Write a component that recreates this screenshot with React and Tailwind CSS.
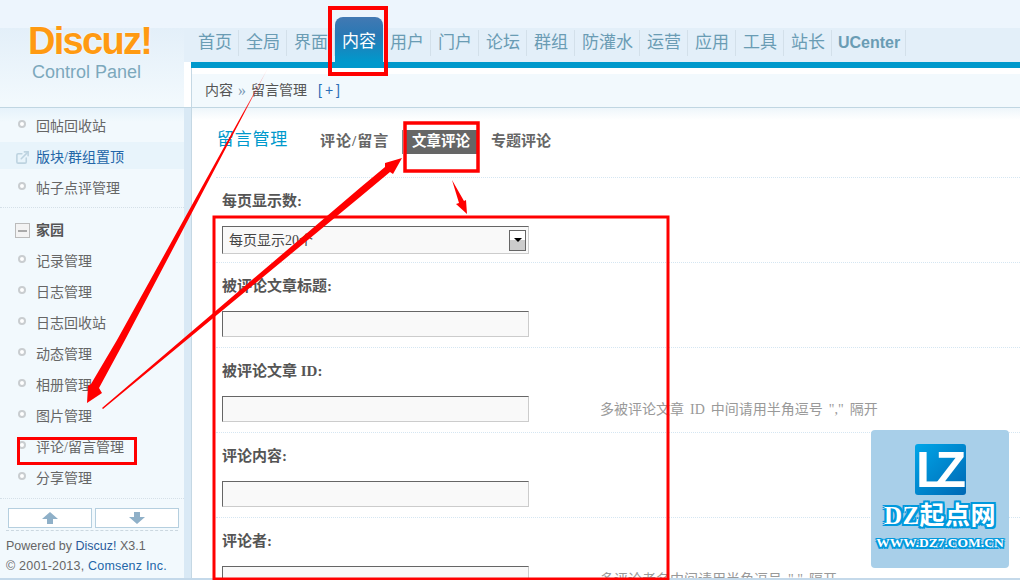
import React from 'react';
import { ExternalLink } from 'lucide-react';

const navItems = ['首页', '全局', '界面', '内容', '用户', '门户', '论坛', '群组', '防灌水', '运营', '应用', '工具', '站长'];

const formRows = [
    { label: '被评论文章标题:' },
    { label: '被评论文章 ID:', hint: '多被评论文章 ID 中间请用半角逗号 "," 隔开' },
    { label: '评论内容:' },
    { label: '评论者:', hint: '多评论者名中间请用半角逗号 "," 隔开' },
];

function SideItem({ text }) {
    return (
        <div className="flex h-[31px] items-center pl-[18px] text-[14px] text-[#666]">
            <span className="mr-[10px] mb-[6px] h-[8px] w-[8px] rounded-full border-2 border-[#c9cdd0] bg-white" />
            {text}
        </div>
    );
}

function Sidebar() {
    return (
        <div className="flex w-[192px] shrink-0 border-r border-[#c5d8e4] bg-[#d9e9f5]">
            <div className="flex w-[184px] flex-col bg-[#f2f9fd] bg-[linear-gradient(#e6f2fb,#f2f9fd_14px)] pt-[3px]">
                <SideItem text="回帖回收站" />
                <div className="flex h-[31px] items-center bg-[linear-gradient(#e8f4fb_27px,transparent_27px)] pl-[15px] text-[14px] text-[#2366a8]">
                    <ExternalLink size={15} strokeWidth={2.5} className="mr-[6px] text-[#bdd3e0]" />
                    版块/群组置顶
                </div>
                <SideItem text="帖子点评管理" />
                <div className="mt-[3px] border-b border-dotted border-[#d5e0e8]" />
                <div className="mt-[7px] flex h-[31px] items-center pl-[15px] text-[14px] font-bold text-[#555]">
                    <span className="mr-[6px] flex h-[15px] w-[15px] items-center justify-center border border-[#bbb] bg-[#f3f3f3]">
                        <span className="h-[2px] w-[9px] bg-[#aaa]" />
                    </span>
                    家园
                </div>
                <SideItem text="记录管理" />
                <SideItem text="日志管理" />
                <SideItem text="日志回收站" />
                <SideItem text="动态管理" />
                <SideItem text="相册管理" />
                <SideItem text="图片管理" />
                <SideItem text="评论/留言管理" />
                <SideItem text="分享管理" />
                <div className="mt-[4px] border-b border-dotted border-[#d5e0e8]" />
                <div className="mt-[9px] flex gap-[3px] pl-[8px]">
                    <div className="flex h-[20px] w-[84px] items-center justify-center border border-[#b5cfdf] bg-white">
                        <svg width="16" height="12" viewBox="0 0 16 12"><polygon points="8,0 16,7 11,7 11,12 5,12 5,7 0,7" fill="#8fb0c8" /></svg>
                    </div>
                    <div className="flex h-[20px] w-[84px] items-center justify-center border border-[#b5cfdf] bg-white">
                        <svg width="16" height="12" viewBox="0 0 16 12"><polygon points="8,12 16,5 11,5 11,0 5,0 5,5 0,5" fill="#8fb0c8" /></svg>
                    </div>
                </div>
                <div className="mx-[6px] mt-[2px] border-b border-dashed border-[#ccd8e0]" />
                <div className="mt-[5px] pl-[6px] font-['Liberation_Sans',sans-serif] text-[12.5px] leading-[20px] whitespace-nowrap text-[#666]">
                    <div>Powered by <span className="text-[#2a5a9a]">Discuz!</span> X3.1</div>
                    <div className="tracking-[0.2px]">© 2001-2013, <span className="text-[#2366a8]">Comsenz Inc.</span></div>
                </div>
            </div>
        </div>
    );
}

function Field({ label, hint }) {
    return (
        <div className="h-[85px] border-b border-dotted border-[#d5e6f2] pt-[15px]">
            <div className="pl-[6px] text-[15px] leading-[16px] font-bold text-[#555]">{label}</div>
            <div className="mt-[17px] flex items-center pl-[6px]">
                <input
                    readOnly
                    className="h-[26px] w-[307px] border border-[#666] border-r-[#ccc] border-b-[#ccc] bg-[#f9f9f9]"
                />
                {hint && <span className="ml-[71px] text-[14px] whitespace-nowrap text-[#999] [word-spacing:2.5px]">{hint}</span>}
            </div>
        </div>
    );
}

function Main() {
    return (
        <div className="min-w-0 flex-1 bg-white bg-[linear-gradient(#eef6fb,#ffffff_12px)] pl-[24px]">
            <div className="flex h-[70px] items-center border-b border-dotted border-[#d5e6f2] pb-[2px]">
                <div className="mb-[4px] ml-[1px] w-[103px] text-[17px] tracking-[0.75px] whitespace-nowrap text-[#0099cc]">留言管理</div>
                <div className="w-[69px] text-[15px] font-bold tracking-[1px] whitespace-nowrap text-[#666]">评论/留言</div>
                <div className="ml-[13px] h-[24px] border-l border-[#888]" />
                <div className="ml-[2px] flex h-[24px] w-[72px] items-center justify-center bg-[#666] text-[14.5px] font-bold text-white">文章评论</div>
                <div className="ml-[14px] text-[15px] font-bold text-[#666]">专题评论</div>
            </div>
            <div className="h-[85px] border-b border-dotted border-[#d5e6f2] pt-[15px]">
                <div className="pl-[6px] text-[15px] leading-[16px] font-bold text-[#555]">每页显示数:</div>
                <div className="mt-[17px] pl-[6px]">
                    <div className="flex h-[28px] w-[307px] items-center justify-between border border-[#666] border-r-[#ccc] border-b-[#ccc] bg-[#f9f9f9] pr-[2px] pl-[6px] text-[14px] text-[#444]">
                        每页显示20个
                        <span className="flex h-[21px] w-[17px] justify-center border border-[#666] bg-[linear-gradient(#fff_45%,#ccc_45%)] pt-[7px]">
                            <span className="h-0 w-0 border-x-[4px] border-t-[4px] border-x-transparent border-t-black" />
                        </span>
                    </div>
                </div>
            </div>
            {formRows.map((row) => (
                <Field key={row.label} label={row.label} hint={row.hint} />
            ))}
        </div>
    );
}

function Annotations() {
    return (
        <svg className="pointer-events-none absolute inset-0" width="1020" height="580" viewBox="0 0 1020 580">
            <defs>
                <linearGradient id="fade" gradientUnits="userSpaceOnUse" x1="0" y1="68" x2="0" y2="115">
                    <stop offset="0" stopColor="#ff0000" stopOpacity="0.15" />
                    <stop offset="1" stopColor="#ff0000" />
                </linearGradient>
            </defs>
            <g fill="none" stroke="#ff0000">
                <rect x="330" y="8" width="56" height="66" strokeWidth="4" />
                <rect x="405" y="123" width="73" height="48" strokeWidth="3.5" />
                <rect x="214" y="217" width="454" height="362" strokeWidth="3" />
                <rect x="18.5" y="438.5" width="117" height="25" strokeWidth="3" />
            </g>
            <polygon fill="url(#fade)" points="268,68 125,340 99,388 102,393 87,403 88,386 91,384 117,340" />
            <g fill="#ff0000">
                <polygon points="102,408 361,187 385,167 385,163 402,158 393,174 390,172 360,197 103,409" />
                <polygon points="452,180 464,201 466,200 467,214 456,204 459,203" />
            </g>
        </svg>
    );
}

function Watermark() {
    return (
        <div className="absolute top-[430px] left-[871px] flex h-[138px] w-[138px] flex-col items-center rounded-[4px] bg-[#a8cfe9] pt-[14px]">
            <div className="flex h-[51px] w-[51px] items-center justify-center rounded-[3px] bg-[linear-gradient(135deg,#00a6e8,#0068b4)] pr-[9px] font-['Liberation_Sans',sans-serif] text-[50px] leading-none font-bold tracking-[-11px] text-white">
                LZ
            </div>
            <div className="mt-[8px] text-[25px] leading-[26px] font-bold tracking-[0.5px] whitespace-nowrap text-white [text-shadow:2px_0_#0099dd,-2px_0_#0099dd,0_2px_#0099dd,0_-2px_#0099dd,2px_2px_#0099dd,-2px_-2px_#0099dd,2px_-2px_#0099dd,-2px_2px_#0099dd]">
                DZ起点网
            </div>
            <div className="mt-[7px] font-['Liberation_Serif',serif] text-[13.5px] leading-[14px] font-bold whitespace-nowrap text-white [text-shadow:1.5px_0_#0099dd,-1.5px_0_#0099dd,0_1.5px_#0099dd,0_-1.5px_#0099dd,1.5px_1.5px_#0099dd,-1.5px_-1.5px_#0099dd,1.5px_-1.5px_#0099dd,-1.5px_1.5px_#0099dd]">
                WWW.DZ7.COM.CN
            </div>
        </div>
    );
}

export default function App() {
    return (
        <div className="relative flex h-[580px] w-[1020px] flex-col overflow-hidden bg-white font-['Liberation_Serif','Noto_Sans_CJK_SC',serif]">
            {/* cabecera */}
            <div className="flex h-[108px] shrink-0 border-b border-[#c0d6e2] bg-[linear-gradient(#edf5fd_28px,#e3eff9_28px,#e3eff9_62px,#ffffff_62px)]">
                <div className="w-[184px] shrink-0 bg-[linear-gradient(#edf5fd_28px,#e3eff9_28px,#f2f9fd_102px)] pt-[20px] pl-[28px] font-['Liberation_Sans',sans-serif]">
                    <div className="text-[38px] leading-[42px] font-bold tracking-[-1.7px] text-[#ff9a12] [text-shadow:0_0_2px_#fff]">Discuz!</div>
                    <div className="pl-[4px] text-[18px] leading-[20px] text-[#7ca8bc]">Control Panel</div>
                </div>
                <div className="flex min-w-0 flex-1 flex-col">
                    <div className="flex h-[62px] shrink-0 items-end pl-[7px] text-[17px] text-[#6a9cb4]">
                        {navItems.map((item) =>
                            item === '内容' ? (
                                <div key={item} className="h-[45px] rounded-t-[8px] bg-[linear-gradient(#4279b3,#2a78b4_40%,#0099cc)] px-[7px] pt-[13px] leading-[24px] text-white">
                                    {item}
                                </div>
                            ) : (
                                <div key={item} className="mb-[6px] h-[26px] border-r border-[#d3e0ea] pt-[1px] pr-[6px] pl-[7px] leading-[24px] whitespace-nowrap">
                                    {item}
                                </div>
                            )
                        )}
                        <div className="mb-[6px] h-[26px] border-r border-[#d3e0ea] pr-[5px] pl-[6px] font-['Liberation_Sans',sans-serif] text-[16px] leading-[26px] font-bold">
                            UCenter
                        </div>
                    </div>
                    <div className="ml-[7px] h-[6px] shrink-0 bg-[#0099cc]" />
                    <div className="ml-[7px] flex flex-1 flex-col border-l border-[#c5d8e4] bg-white pt-[6px]">
                        <div className="flex flex-1 items-center bg-[#f2f9fd] pl-[13px] text-[14px] text-[#555]">
                            内容
                            <span className="mx-[5px] text-[16px] leading-none text-[#7c9ab5]">»</span>
                            留言管理
                            <span className="ml-[11px] font-['Liberation_Sans',sans-serif] tracking-[3px] text-[#2a6db5]">[+]</span>
                        </div>
                    </div>
                </div>
            </div>

            <div className="flex h-[470px] shrink-0">
                <Sidebar />
                <Main />
            </div>
            <div className="h-[2px] shrink-0 bg-[#c4d9ea]" />

            <Watermark />
            <Annotations />
        </div>
    );
}
